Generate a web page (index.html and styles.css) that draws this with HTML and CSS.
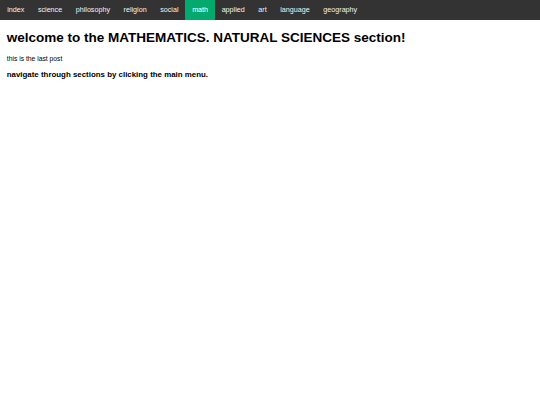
FILE: index.html
```html
<!DOCTYPE html>
<html>
<head>
<meta charset="utf-8">
<link rel="stylesheet" href="styles.css">
</head>
<body>
<nav class="topnav">
  <a href="#">index</a>
  <a href="#">science</a>
  <a href="#">philosophy</a>
  <a href="#">religion</a>
  <a href="#">social</a>
  <a href="#" class="active">math</a>
  <a href="#">applied</a>
  <a href="#">art</a>
  <a href="#">language</a>
  <a href="#">geography</a>
</nav>
<main class="content">
  <h1 class="title">welcome to the MATHEMATICS. NATURAL SCIENCES section!</h1>
  <p class="note">this is the last post</p>
  <h3 class="hint">navigate through sections by clicking the main menu.</h3>
</main>
</body>
</html>
```
FILE: styles.css
```css
html, body {
  margin: 0;
  padding: 0;
  background: #ffffff;
}
body {
  font-family: "Liberation Sans", Arial, sans-serif;
  font-size: 6.75px;
  color: #000;
}
.topnav {
  display: flex;
  background: #333333;
}
.topnav a {
  display: block;
  color: #f2f2f2;
  text-decoration: none;
  font-size: 7.17px;
  line-height: 8.4px;
  padding: 5.9px 6.8px;
}
.topnav a:first-child {
  padding-left: 7.2px;
}
.topnav a.active {
  background: #04AA6D;
  color: #ffffff;
}
.content {
  padding: 0 6.75px;
  display: flow-root;
}
.title {
  font-size: 13.5px;
  margin: 9.8px 0;
  font-weight: bold;
}
.note {
  margin: 7.2px 0;
}
.hint {
  font-size: 7.9px;
  margin: 8.4px 0;
  font-weight: bold;
}
```
